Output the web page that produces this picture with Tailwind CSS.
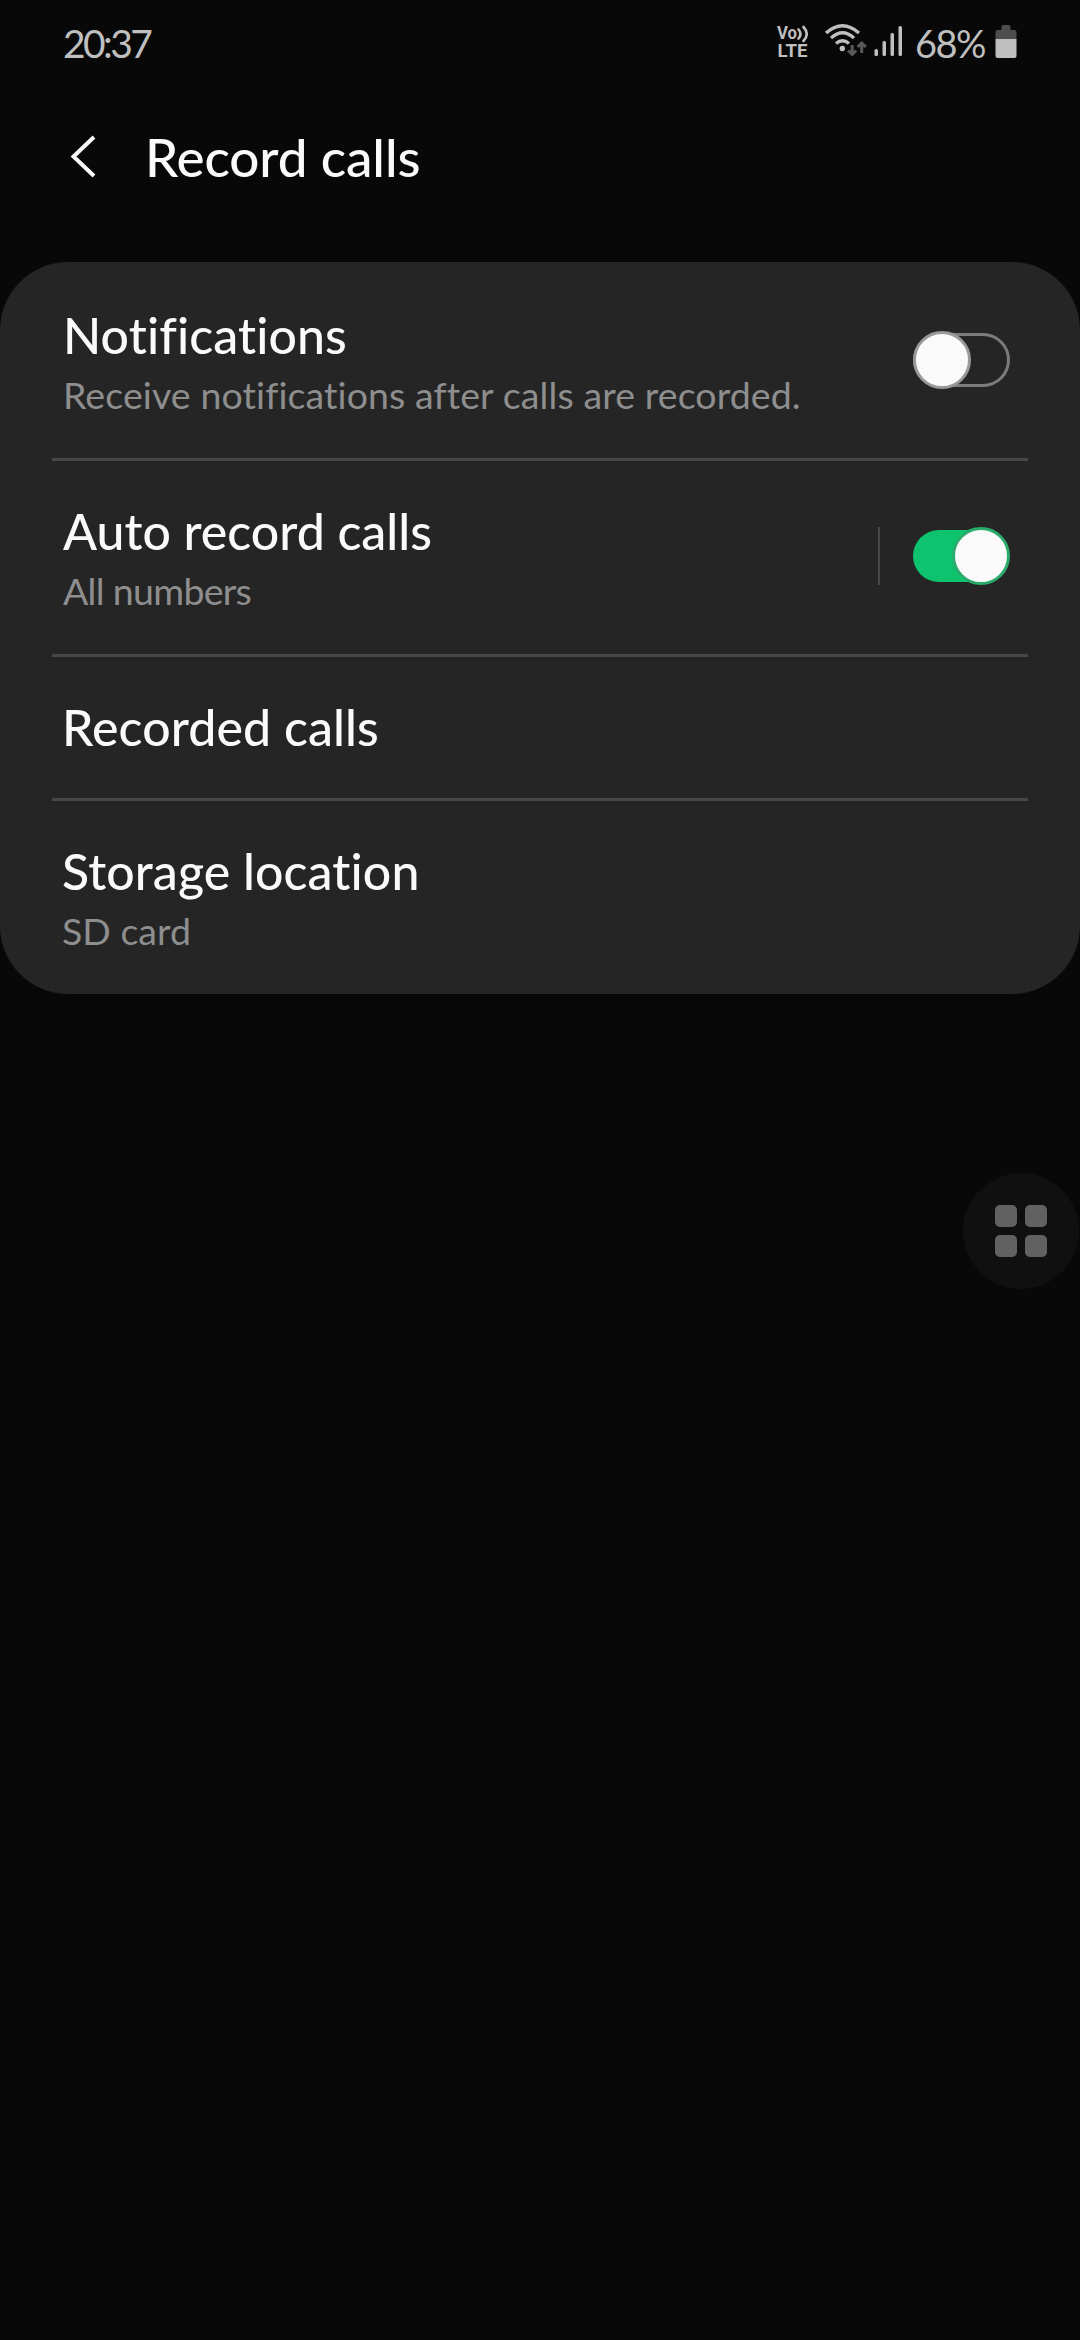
<!DOCTYPE html>
<html lang="en">
<head>
    <meta charset="UTF-8">
    <meta name="viewport" content="width=device-width, initial-scale=1.0">
    <title>Record calls</title>
    <script src="https://cdn.jsdelivr.net/npm/@tailwindcss/browser@4"></script>
</head>
<body class="bg-[#080808]">
    <div class="w-[1080px] h-[2340px] overflow-hidden bg-[#080808] text-[#fafafa] font-['Lato',sans-serif]">

        <!-- Status bar -->
        <div class="flex h-[84px] items-center justify-between pl-[63px] pr-[63px] text-[#bfbfbf]">
            <span class="mt-[2px] text-[39px] leading-[84px] tracking-[-2.6px]">20:37</span>
            <div class="flex items-center">
                <!-- VoLTE -->
                <svg class="w-[34px] h-[84px]" viewBox="0 0 34 84" fill="none">
                    <g fill="#bfbfbf" font-family="Roboto, sans-serif" font-weight="700">
                        <text x="0" y="39" font-size="18" textLength="20" lengthAdjust="spacingAndGlyphs">Vo</text>
                        <text x="0.500" y="57" font-size="19" textLength="30" lengthAdjust="spacingAndGlyphs">LTE</text>
                    </g>
                    <path d="M21.500 29.500q4 4.500 0 9M26.500 27q6.500 7 0 14" stroke="#bfbfbf" stroke-width="2.600" stroke-linecap="round"/>
                </svg>
                <!-- Wi-Fi -->
                <svg class="ml-[13px] w-[44px] h-[84px]" viewBox="0 0 44 84" fill="none">
                    <path d="M2 33Q18.500 18.500 35 33M7 38Q18.500 27.500 30 38M12 43.500Q18.500 38 25 43.500" stroke="#bfbfbf" stroke-width="3.200"/>
                    <circle cx="18.300" cy="48.500" r="2.700" fill="#bfbfbf"/>
                    <path d="M28.200 45v9M24.200 50.500l4 4 4-4M37.700 53v-9M33.700 47l4-4 4 4" stroke="#5a5a5a" stroke-width="3"/>
                </svg>
                <!-- Signal -->
                <svg class="ml-[6px] w-[30px] h-[84px]" viewBox="0 0 30 84" fill="#bfbfbf">
                    <rect x="0.500" y="49" width="3.500" height="7" rx="1.500"/>
                    <rect x="8.500" y="41" width="3.500" height="15" rx="1.500"/>
                    <rect x="16.500" y="33" width="3.500" height="23" rx="1.500"/>
                    <rect x="24.500" y="26" width="3.500" height="30" rx="1.500"/>
                </svg>
                <span class="mt-[2px] ml-[11px] w-[80px] text-[38px] leading-[84px] tracking-[-1.5px]">68%</span>
                <!-- Battery -->
                <svg class="w-[22px] h-[84px]" viewBox="0 0 22 84">
                    <path d="M0.500 39v-7q0-2 2-2h4v-3q0-2 2-2h5q2 0 2 2v3h4q2 0 2 2v7z" fill="#4d4d4d"/>
                    <path d="M0.500 39h21v17q0 2-2 2h-17q-2 0-2-2z" fill="#bfbfbf"/>
                </svg>
            </div>
        </div>

        <!-- Header -->
        <header class="flex h-[178px] items-start pl-[70px] pt-[42px]">
            <svg class="mt-[8px] w-[28px] h-[44px]" viewBox="0 0 28 44" fill="none">
                <path d="M24 3L3.500 22.500L24 42" stroke="#fafafa" stroke-width="4"/>
            </svg>
            <h1 class="mt-px ml-[47px] text-[53px] leading-[60px] font-medium tracking-[-0.1px]">Record calls</h1>
        </header>

        <!-- Settings -->
        <main class="h-[732px] overflow-hidden rounded-[68px] bg-[#252525] px-[52px]">
            <section class="flex h-[196px] justify-between pr-[17px]">
                <div class="pl-[11px] pt-[43px]">
                    <h2 class="text-[50px] leading-[60px] font-medium tracking-[0.1px]">Notifications</h2>
                    <p class="text-[37.5px] leading-[60px] tracking-[0.1px] text-[#8e8e8e]">Receive notifications after calls are recorded.</p>
                </div>
                <svg class="mt-[66px] w-[100px] h-[64px]" viewBox="0 0 100 64">
                    <rect x="3.500" y="6.500" width="94" height="51" rx="25.500" fill="none" stroke="#7c7c7c" stroke-width="3"/>
                    <circle cx="31" cy="32" r="27.500" fill="#fafafa" stroke="#999999" stroke-width="3"/>
                </svg>
            </section>

            <section class="flex h-[196px] justify-between border-t-3 border-[#484848] pr-[17px]">
                <div class="pl-[11px] pt-[40px]">
                    <h2 class="text-[50px] leading-[60px] font-medium">Auto record calls</h2>
                    <p class="text-[37.5px] leading-[60px] tracking-[-0.7px] text-[#8e8e8e]">All numbers</p>
                </div>
                <div class="flex">
                    <div class="mt-[66px] mr-[29px] h-[58px] w-[2px] bg-[#484848]"></div>
                    <svg class="mt-[63px] w-[102px] h-[64px]" viewBox="0 0 102 64">
                        <rect x="4" y="6" width="94" height="52" rx="26" fill="#0dc36e"/>
                        <circle cx="72" cy="32" r="27.500" fill="#fafafa" stroke="#2bab6b" stroke-width="3"/>
                    </svg>
                </div>
            </section>

            <section class="h-[144px] border-t-3 border-[#484848] pl-[10px] pt-[40px]">
                <h2 class="text-[50px] leading-[60px] font-medium tracking-[0.1px]">Recorded calls</h2>
            </section>

            <section class="h-[196px] border-t-3 border-[#484848] pl-[10px] pt-[40px]">
                <h2 class="text-[50px] leading-[60px] font-medium tracking-[0.1px]">Storage location</h2>
                <p class="text-[37.5px] leading-[60px] text-[#8e8e8e]">SD card</p>
            </section>
        </main>

        <!-- Floating assistant menu -->
        <div class="ml-auto mt-[179px] mr-px grid h-[116px] w-[116px] grid-cols-[22px_22px] place-content-center gap-[8px] rounded-full bg-[#101010]">
            <span class="h-[22px] rounded-[5px] bg-[#616161]"></span>
            <span class="h-[22px] rounded-[5px] bg-[#616161]"></span>
            <span class="h-[22px] rounded-[5px] bg-[#616161]"></span>
            <span class="h-[22px] rounded-[5px] bg-[#616161]"></span>
        </div>
    </div>
</body>
</html>
